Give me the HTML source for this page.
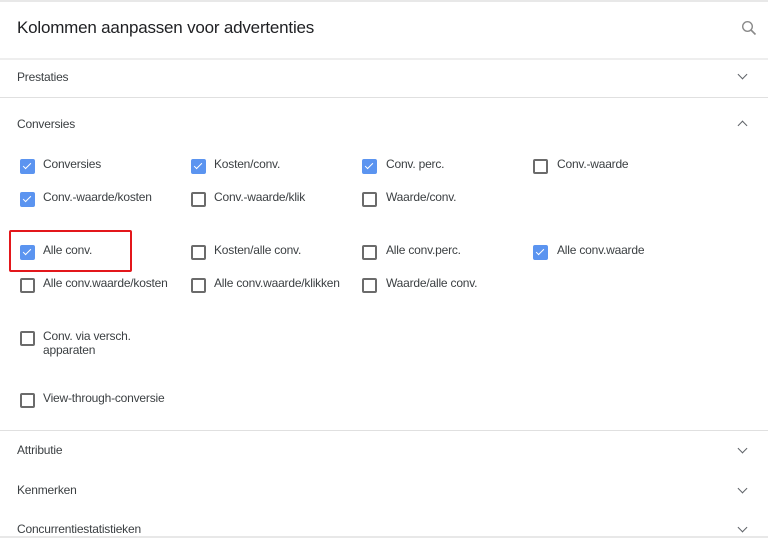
<!DOCTYPE html><html><head><style>
body{margin:0;width:768px;height:538px;background:#fff;font-family:"Liberation Sans",Arial,sans-serif;color:#3c4043;position:relative;overflow:hidden}
.a{position:absolute}
.t{font-size:12px;letter-spacing:-0.2px;white-space:nowrap}
.cb{position:absolute;width:11px;height:11px;border:2px solid #6b6b6b;border-radius:2px}
.cb.on{background:#5b94f0;border-color:#5b94f0}
.cb.on:after{content:"";position:absolute;left:3px;top:0px;width:3px;height:7px;border:solid #fff;border-width:0 1.5px 1.5px 0;transform:rotate(45deg)}
.hr{position:absolute;left:0;width:768px;height:1px;background:#e0e0e0}
.chev{position:absolute;width:6px;height:6px;border:solid #5f6368;border-width:0 1.5px 1.5px 0}
</style></head><body>
<div class="hr" style="top:0;height:2px;background:#e8e8e8"></div>
<div class="a" style="left:17px;top:18px;font-size:17px;color:#202124;letter-spacing:-0.2px">Kolommen aanpassen voor advertenties</div>
<svg class="a" style="left:741px;top:20px" width="16" height="16" viewBox="0 0 16 16"><circle cx="6.5" cy="6.5" r="4.8" fill="none" stroke="#8a8a8a" stroke-width="1.4"/><path d="M10 10l4.5 4.5" stroke="#8a8a8a" stroke-width="1.6"/></svg>
<div class="hr" style="top:58px;height:2px;background:#eee"></div>
<div class="a t" style="left:17px;top:70px">Prestaties</div>
<div class="chev" style="left:739px;top:71px;transform:rotate(45deg)"></div>
<div class="hr" style="top:97px"></div>
<div class="a t" style="left:17px;top:117px">Conversies</div>
<div class="chev" style="left:739px;top:122px;transform:rotate(-135deg)"></div>

<div class="cb on" style="left:20px;top:159px"></div><div class="a t" style="left:43px;top:157px">Conversies</div>
<div class="cb on" style="left:191px;top:159px"></div><div class="a t" style="left:214px;top:157px">Kosten/conv.</div>
<div class="cb on" style="left:362px;top:159px"></div><div class="a t" style="left:386px;top:157px">Conv. perc.</div>
<div class="cb" style="left:533px;top:159px"></div><div class="a t" style="left:557px;top:157px">Conv.-waarde</div>

<div class="cb on" style="left:20px;top:192px"></div><div class="a t" style="left:43px;top:190px">Conv.-waarde/kosten</div>
<div class="cb" style="left:191px;top:192px"></div><div class="a t" style="left:214px;top:190px">Conv.-waarde/klik</div>
<div class="cb" style="left:362px;top:192px"></div><div class="a t" style="left:386px;top:190px">Waarde/conv.</div>

<div class="a" style="left:9px;top:230px;width:119px;height:38px;border:2px solid #e3171b;border-radius:2px"></div>
<div class="cb on" style="left:20px;top:245px"></div><div class="a t" style="left:43px;top:243px">Alle conv.</div>
<div class="cb" style="left:191px;top:245px"></div><div class="a t" style="left:214px;top:243px">Kosten/alle conv.</div>
<div class="cb" style="left:362px;top:245px"></div><div class="a t" style="left:386px;top:243px">Alle conv.perc.</div>
<div class="cb on" style="left:533px;top:245px"></div><div class="a t" style="left:557px;top:243px">Alle conv.waarde</div>

<div class="cb" style="left:20px;top:278px"></div><div class="a t" style="left:43px;top:276px">Alle conv.waarde/kosten</div>
<div class="cb" style="left:191px;top:278px"></div><div class="a t" style="left:214px;top:276px">Alle conv.waarde/klikken</div>
<div class="cb" style="left:362px;top:278px"></div><div class="a t" style="left:386px;top:276px">Waarde/alle conv.</div>

<div class="cb" style="left:20px;top:331px"></div><div class="a t" style="left:43px;top:329px;line-height:14px">Conv. via versch.<br>apparaten</div>
<div class="cb" style="left:20px;top:393px"></div><div class="a t" style="left:43px;top:391px">View-through-conversie</div>

<div class="hr" style="top:430px"></div>
<div class="a t" style="left:17px;top:443px">Attributie</div>
<div class="chev" style="left:739px;top:445px;transform:rotate(45deg)"></div>
<div class="a t" style="left:17px;top:483px">Kenmerken</div>
<div class="chev" style="left:739px;top:485px;transform:rotate(45deg)"></div>
<div class="a t" style="left:17px;top:522px">Concurrentiestatistieken</div>
<div class="chev" style="left:739px;top:524px;transform:rotate(45deg)"></div>
<div class="hr" style="top:536px;height:2px;background:#e8e8e8"></div>
</body></html>
